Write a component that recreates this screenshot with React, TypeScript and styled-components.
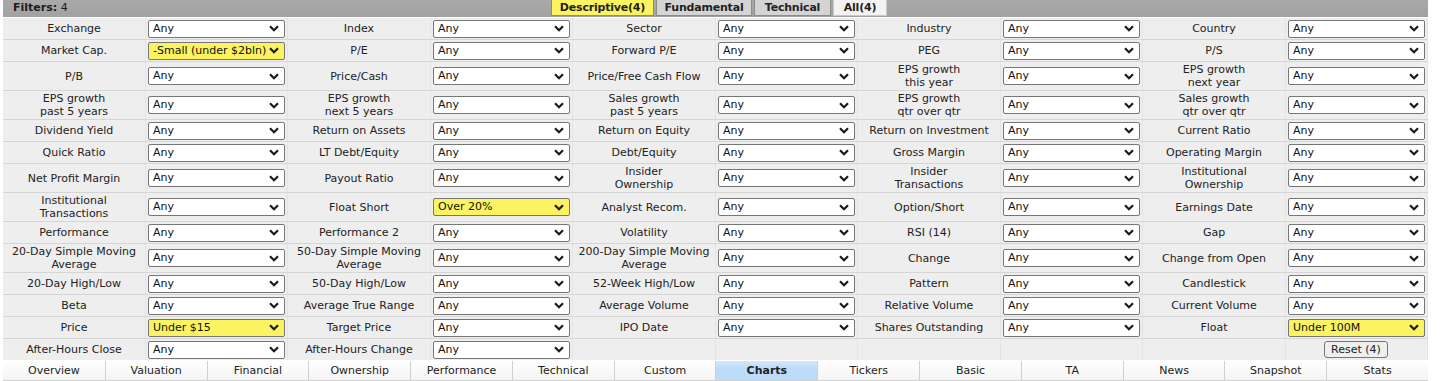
import styled, { createGlobalStyle } from 'styled-components'

const GlobalStyle = createGlobalStyle`
  body {
    margin: 0;
    background: #ffffff;
    font-family: "DejaVu Sans", Verdana, sans-serif;
  }
`

const Screener = styled.div`
  width: 1425px;
  margin-left: 3px;
  display: flex;
  flex-direction: column;
  gap: 1px;
  background: #ffffff;
`

const TopBar = styled.div`
  height: 17px;
  display: flex;
  align-items: stretch;
  background: linear-gradient(#a9a9a9, #a2a2a2);
`

const FilterCount = styled.div`
  width: 548px;
  font-size: 11px;
  line-height: 16px;
  color: #1c1c1c;
  padding-left: 10px;
  box-sizing: border-box;
  b {
    font-weight: bold;
  }
`

const TopTabs = styled.div`
  display: flex;
  gap: 2px;
`

const TopTab = styled.div<{ $kind: 'on' | 'off' | 'all'; $w: number }>`
  width: ${(p) => p.$w}px;
  height: 16px;
  box-sizing: border-box;
  text-align: center;
  font-size: 11px;
  font-weight: bold;
  line-height: 15px;
  letter-spacing: -0.2px;
  color: #222;
  border: 1px solid #888;
  border-top: none;
  background: ${(p) => (p.$kind === 'on' ? '#fbf35f' : p.$kind === 'all' ? '#f3f3f3' : '#d4d4d4')};
  border-color: ${(p) => (p.$kind === 'all' ? '#c9c9c9' : '#8b8b8b')};
`

const Grid = styled.div`
  display: grid;
  grid-template-columns: repeat(5, 143px 142px);
  gap: 1px 0;
  background: #d6d6d6;
`

const LabelCell = styled.div`
  min-height: 21px;
  padding: 1px 0;
  box-sizing: border-box;
  display: flex;
  align-items: center;
  justify-content: center;
  text-align: center;
  white-space: pre-line;
  font-size: 11px;
  line-height: 13px;
  color: #222;
  background: #eeeeee;
  border-right: 1px solid #e4e4e4;
`

const InputCell = styled.div`
  min-height: 21px;
  display: flex;
  align-items: center;
  padding: 0 2px;
  box-sizing: border-box;
  background: #eeeeee;
  border-right: 1px solid #e4e4e4;
`

const SelectBox = styled.div<{ $active?: boolean }>`
  width: 139px;
  height: 18px;
  box-sizing: border-box;
  display: flex;
  align-items: center;
  justify-content: space-between;
  padding: 0 5px 0 4px;
  border: 1px solid #767676;
  border-radius: 2px;
  font-size: 11px;
  line-height: 14px;
  color: #111;
  background: ${(p) => (p.$active ? '#fbf35f' : '#ffffff')};
`

const ResetButton = styled.button`
  height: 17px;
  padding: 0 6px;
  font-family: "DejaVu Sans", Verdana, sans-serif;
  font-size: 11px;
  line-height: 14px;
  color: #222;
  background: #efefef;
  border: 1px solid #767676;
  border-radius: 3px;
  margin-left: 36px;
`

const BottomTabs = styled.div`
  height: 20px;
  display: grid;
  grid-template-columns: repeat(14, 1fr);
  border-bottom: 1px solid #d0d0d0;
  box-sizing: border-box;
  background: linear-gradient(#ffffff, #f4f4f4);
`

const BottomTab = styled.div<{ $active?: boolean }>`
  font-size: 11px;
  line-height: 19px;
  text-align: center;
  color: #222;
  border-left: 1px solid #d0d0d0;
  font-weight: ${(p) => (p.$active ? 'bold' : 'normal')};
  background: ${(p) => (p.$active ? 'linear-gradient(#d4e8fc, #bddcfa 40%, #bddcfa)' : 'transparent')};
  &:first-child {
    border-left: none;
  }
`

type Filter = { label: string; value?: string; active?: boolean } | null

const rows: Filter[][] = [
  [{ label: 'Exchange' }, { label: 'Index' }, { label: 'Sector' }, { label: 'Industry' }, { label: 'Country' }],
  [
    { label: 'Market Cap.', value: '-Small (under $2bln)', active: true },
    { label: 'P/E' },
    { label: 'Forward P/E' },
    { label: 'PEG' },
    { label: 'P/S' },
  ],
  [
    { label: 'P/B' },
    { label: 'Price/Cash' },
    { label: 'Price/Free Cash Flow' },
    { label: 'EPS growth\nthis year' },
    { label: 'EPS growth\nnext year' },
  ],
  [
    { label: 'EPS growth\npast 5 years' },
    { label: 'EPS growth\nnext 5 years' },
    { label: 'Sales growth\npast 5 years' },
    { label: 'EPS growth\nqtr over qtr' },
    { label: 'Sales growth\nqtr over qtr' },
  ],
  [
    { label: 'Dividend Yield' },
    { label: 'Return on Assets' },
    { label: 'Return on Equity' },
    { label: 'Return on Investment' },
    { label: 'Current Ratio' },
  ],
  [
    { label: 'Quick Ratio' },
    { label: 'LT Debt/Equity' },
    { label: 'Debt/Equity' },
    { label: 'Gross Margin' },
    { label: 'Operating Margin' },
  ],
  [
    { label: 'Net Profit Margin' },
    { label: 'Payout Ratio' },
    { label: 'Insider\nOwnership' },
    { label: 'Insider\nTransactions' },
    { label: 'Institutional\nOwnership' },
  ],
  [
    { label: 'Institutional\nTransactions' },
    { label: 'Float Short', value: 'Over 20%', active: true },
    { label: 'Analyst Recom.' },
    { label: 'Option/Short' },
    { label: 'Earnings Date' },
  ],
  [{ label: 'Performance' }, { label: 'Performance 2' }, { label: 'Volatility' }, { label: 'RSI (14)' }, { label: 'Gap' }],
  [
    { label: '20-Day Simple Moving\nAverage' },
    { label: '50-Day Simple Moving\nAverage' },
    { label: '200-Day Simple Moving\nAverage' },
    { label: 'Change' },
    { label: 'Change from Open' },
  ],
  [
    { label: '20-Day High/Low' },
    { label: '50-Day High/Low' },
    { label: '52-Week High/Low' },
    { label: 'Pattern' },
    { label: 'Candlestick' },
  ],
  [
    { label: 'Beta' },
    { label: 'Average True Range' },
    { label: 'Average Volume' },
    { label: 'Relative Volume' },
    { label: 'Current Volume' },
  ],
  [
    { label: 'Price', value: 'Under $15', active: true },
    { label: 'Target Price' },
    { label: 'IPO Date' },
    { label: 'Shares Outstanding' },
    { label: 'Float', value: 'Under 100M', active: true },
  ],
  [{ label: 'After-Hours Close' }, { label: 'After-Hours Change' }, null, null, null],
]

const tabs = [
  'Overview', 'Valuation', 'Financial', 'Ownership', 'Performance', 'Technical', 'Custom',
  'Charts', 'Tickers', 'Basic', 'TA', 'News', 'Snapshot', 'Stats',
]

const Select = ({ value, active }: { value: string; active?: boolean }) => (
  <SelectBox $active={active} role="combobox">
    <span>{value}</span>
    <svg width="10" height="7" viewBox="0 0 10 7">
      <path d="M1 1.2 L5 5.2 L9 1.2" fill="none" stroke="#1a1a1a" strokeWidth="2.2" />
    </svg>
  </SelectBox>
)

const App = () => {
  return (
    <Screener>
      <GlobalStyle />
      <TopBar>
        <FilterCount>
          <b>Filters:</b> 4
        </FilterCount>
        <TopTabs>
          <TopTab $kind="on" $w={103}>Descriptive(4)</TopTab>
          <TopTab $kind="off" $w={96}>Fundamental</TopTab>
          <TopTab $kind="off" $w={77}>Technical</TopTab>
          <TopTab $kind="all" $w={54}>All(4)</TopTab>
        </TopTabs>
      </TopBar>
      <Grid>
        {rows.map((row, r) =>
          row.map((f, c) =>
            f
              ? [
                  <LabelCell key={`l${r}-${c}`}>{f.label}</LabelCell>,
                  <InputCell key={`s${r}-${c}`}>
                    <Select value={f.value ?? 'Any'} active={f.active} />
                  </InputCell>,
                ]
              : [
                  <LabelCell key={`l${r}-${c}`} />,
                  <InputCell key={`s${r}-${c}`}>
                    {c === 4 ? <ResetButton>Reset (4)</ResetButton> : null}
                  </InputCell>,
                ],
          ),
        )}
      </Grid>
      <BottomTabs>
        {tabs.map((t) => (
          <BottomTab key={t} $active={t === 'Charts'}>
            {t}
          </BottomTab>
        ))}
      </BottomTabs>
    </Screener>
  )
}

export default App
